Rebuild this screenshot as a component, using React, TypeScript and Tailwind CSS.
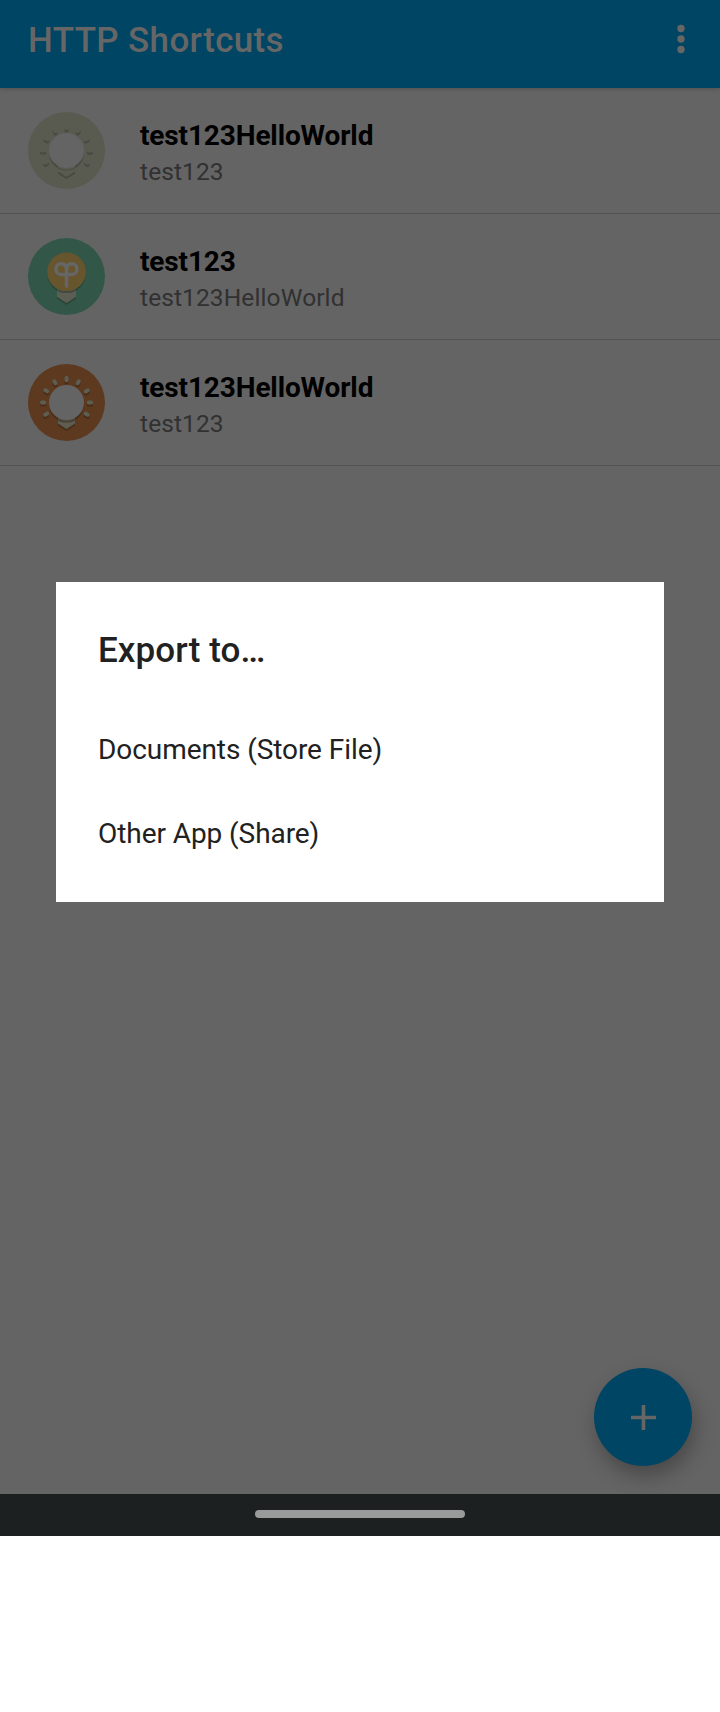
import type { ReactNode } from "react";

const RAYS = [-120, -90, -60, -30, 0, 30, 60, 90, 120];

function Disc({ fill, children }: { fill: string; children: ReactNode }) {
  return (
    <svg className="size-[77px] shrink-0" viewBox="0 0 77 77" aria-hidden="true">
      <circle cx="38.5" cy="38.5" r="38.5" fill={fill} />
      {children}
    </svg>
  );
}

function Rays({ fill, dy }: { fill: string; dy: number }) {
  return (
    <g transform={`translate(0 ${dy})`} fill={fill}>
      {RAYS.map((a) => (
        <rect key={a} x="36.6" y="12" width="3.9" height="6.2" rx="1.9" transform={`rotate(${a} 38.5 38.5)`} />
      ))}
    </g>
  );
}

function RayBulb({ disc, shade, base, baseShade }: { disc: string; shade: string; base: string; baseShade: string }) {
  return (
    <Disc fill={disc}>
      <Rays fill={shade} dy={2.2} />
      <Rays fill={base} dy={0} />
      <path d="M30 54H47V61.8L38.5 67.1L30 61.8Z" fill={shade} />
      <path d="M30 52H47V59.6L38.5 64.9L30 59.6Z" fill={base} />
      <path d="M21 38.5A17.5 17.5 0 0 0 56 38.5V41A17.5 17.5 0 0 1 21 41Z" fill={shade} />
      <path d="M30 53.5Q38.5 58 47 53.5V55.6Q38.5 60.4 30 55.6Z" fill={baseShade} />
      <circle cx="38.5" cy="38.5" r="17.5" fill="#646464" />
    </Disc>
  );
}

function SproutBulb() {
  return (
    <Disc fill="#325749">
      <path d="M29 49H48V60.7L38.5 67L29 60.7Z" fill="#28463a" />
      <path d="M29 49H48V58.7L38.5 65L29 58.7Z" fill="#5c5e54" />
      <path d="M19.2 33.8A19.3 19.3 0 0 0 57.8 33.8V35.8A19.3 19.3 0 0 1 19.2 35.8Z" fill="#28463a" />
      <path d="M29 51Q38.5 56 48 51V52.6Q38.5 57.6 29 52.6Z" fill="#4a4b43" />
      <circle cx="38.5" cy="33.8" r="19.3" fill="#67552d" />
      <g fill="none" stroke="#666666" strokeWidth="3.5" strokeLinecap="round" strokeLinejoin="round">
        <path d="M38.5 48.3V31.5C38.5 28 36.3 25.7 33.2 25.7C30.2 25.7 28 28 28 31C28 34.2 30.4 36.6 33.6 36.6H43.4C46.6 36.6 49 34.2 49 31C49 28 46.8 25.7 43.8 25.7C40.7 25.7 38.5 28 38.5 31.5" />
      </g>
    </Disc>
  );
}

function Row({ icon, title, subtitle }: { icon: ReactNode; title: string; subtitle: string }) {
  return (
    <li className="flex h-[126px] border-b border-[#525252] px-7 pt-6">
      {icon}
      <div className="ml-[35px] flex flex-col pt-[7px]">
        <span className="text-[28px] leading-[33px] font-bold tracking-[-0.13px] text-black">{title}</span>
        <span className="mt-[5px] text-[24.5px] leading-[29px] tracking-[0.11px] text-[#313131]">{subtitle}</span>
      </div>
    </li>
  );
}

export default function App() {
  return (
    <div className="h-[1712px] w-[720px] bg-white font-['Roboto',sans-serif]">
      <div className="relative flex h-[1536px] flex-col bg-[#646464]">
        <header className="z-10 flex h-[88px] shrink-0 items-center justify-between bg-[#004563] pr-[35px] pl-7 shadow-[0_1px_4px_rgba(0,0,0,0.2)]">
          <h1 className="-mt-[7px] text-[35px] leading-[41px] font-medium tracking-[0.35px] text-[#666666]">HTTP Shortcuts</h1>
          <svg className="-mt-[10px] h-[30px] w-2" viewBox="0 0 8 30" fill="#666666" aria-label="More options">
            <circle cx="4" cy="4.5" r="3.7" />
            <circle cx="4" cy="15" r="3.7" />
            <circle cx="4" cy="25.5" r="3.7" />
          </svg>
        </header>

        <ul className="flex-1">
          <Row
            icon={<RayBulb disc="#595b50" shade="#484940" base="#595b50" baseShade="#595b50" />}
            title="test123HelloWorld"
            subtitle="test123"
          />
          <Row icon={<SproutBulb />} title="test123" subtitle="test123HelloWorld" />
          <Row
            icon={<RayBulb disc="#5d391f" shade="#4b2e18" base="#5c5e54" baseShade="#4a4b43" />}
            title="test123HelloWorld"
            subtitle="test123"
          />
        </ul>

        <button
          aria-label="Add"
          className="absolute right-7 bottom-[70px] flex size-[98px] items-center justify-center rounded-full bg-[#004563] shadow-[3px_10px_20px_rgba(0,0,0,0.28)]"
        >
          <svg className="size-[25px]" viewBox="0 0 25 25" aria-hidden="true">
            <path d="M12.5 0V25M0 12.5H25" stroke="#666666" strokeWidth="3.6" />
          </svg>
        </button>

        <section role="dialog" className="absolute top-[582px] left-14 h-[320px] w-[608px] bg-white px-[42px] pt-12 text-[#212121]">
          <h2 className="text-[35px] leading-[41px] font-medium tracking-[0.1px]">Export to…</h2>
          <ul className="mt-[37px] text-[28px] tracking-[-0.07px]">
            <li className="flex h-[84px] items-center">Documents (Store File)</li>
            <li className="flex h-[84px] items-center">Other App (Share)</li>
          </ul>
        </section>

        <footer className="z-10 flex h-[42px] shrink-0 justify-center bg-[#1c2021] pt-4">
          <div className="h-2 w-[210px] rounded-full bg-[#989b9a]" />
        </footer>
      </div>
    </div>
  );
}
